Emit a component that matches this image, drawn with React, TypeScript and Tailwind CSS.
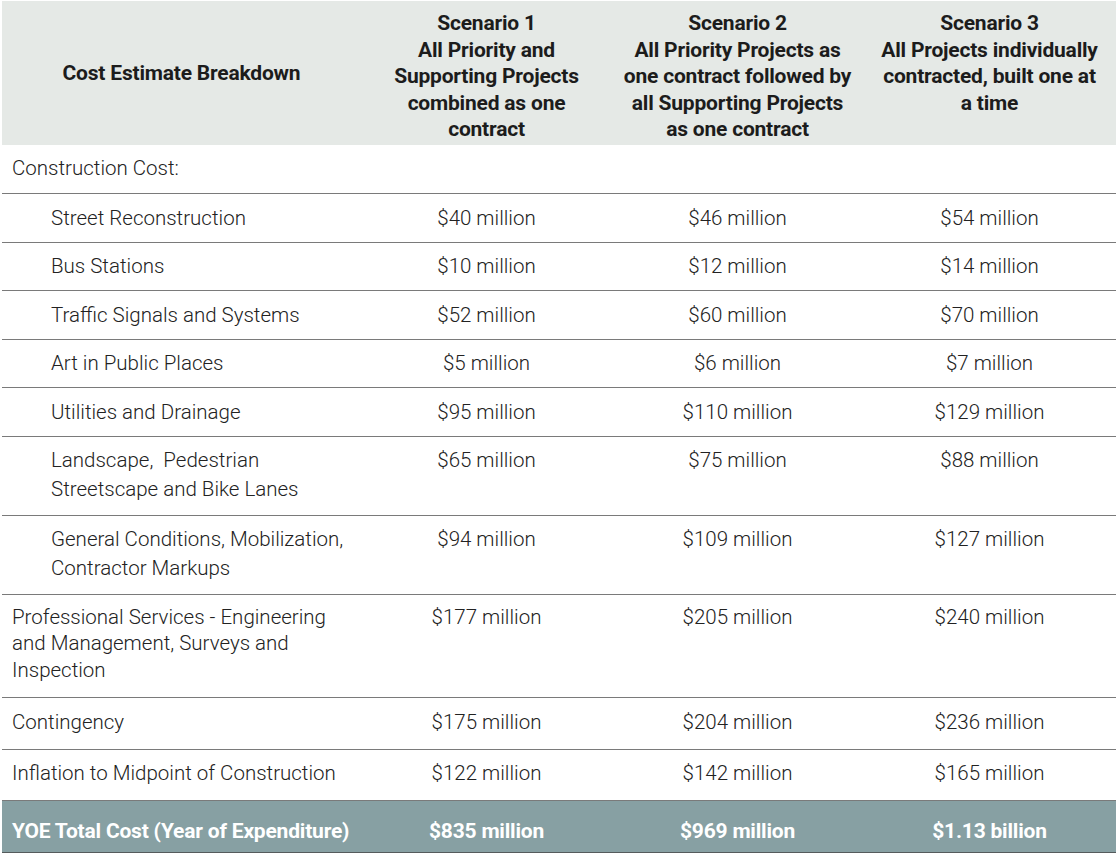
import React from "react";

type Row = {
  label: string[];
  values: string[];
  indent?: boolean;
  h: number;
  pt: number;
  leading: string;
};

const rows: Row[] = [
  { label: ["Street Reconstruction"], values: ["$40 million", "$46 million", "$54 million"], indent: true, h: 49, pt: 10, leading: "leading-[28px]" },
  { label: ["Bus Stations"], values: ["$10 million", "$12 million", "$14 million"], indent: true, h: 48, pt: 9, leading: "leading-[28px]" },
  { label: ["Traffic Signals and Systems"], values: ["$52 million", "$60 million", "$70 million"], indent: true, h: 49, pt: 10, leading: "leading-[28px]" },
  { label: ["Art in Public Places"], values: ["$5 million", "$6 million", "$7 million"], indent: true, h: 48, pt: 9, leading: "leading-[28px]" },
  { label: ["Utilities and Drainage"], values: ["$95 million", "$110 million", "$129 million"], indent: true, h: 49, pt: 10, leading: "leading-[28px]" },
  { label: ["Landscape,  Pedestrian", "Streetscape and Bike Lanes"], values: ["$65 million", "$75 million", "$88 million"], indent: true, h: 79, pt: 9, leading: "leading-[29px]" },
  { label: ["General Conditions, Mobilization,", "Contractor Markups"], values: ["$94 million", "$109 million", "$127 million"], indent: true, h: 79, pt: 9, leading: "leading-[29px]" },
  { label: ["Professional Services - Engineering", "and Management, Surveys and", "Inspection"], values: ["$177 million", "$205 million", "$240 million"], h: 103, pt: 9, leading: "leading-[26.5px]" },
  { label: ["Contingency"], values: ["$175 million", "$204 million", "$236 million"], h: 52, pt: 10, leading: "leading-[28px]" },
  { label: ["Inflation to Midpoint of Construction"], values: ["$122 million", "$142 million", "$165 million"], h: 51, pt: 9, leading: "leading-[28px]" },
];

const headers = [
  ["Scenario 1", "All Priority and", "Supporting Projects", "combined as one", "contract"],
  ["Scenario 2", "All Priority Projects as", "one contract followed by", "all Supporting Projects", "as one contract"],
  ["Scenario 3", "All Projects individually", "contracted, built one at", "a time"],
];

export default function App() {
  return (
    <div
      className="w-[1116px] h-[856px] bg-white overflow-hidden text-[#222222]"
      style={{ fontFamily: "Roboto, 'Liberation Sans', sans-serif" }}
    >
      <table className="ml-[2px] mt-[1px] w-[1114px] border-collapse table-fixed">
        <colgroup>
          <col className="w-[359px]" />
          <col className="w-[251px]" />
          <col className="w-[251px]" />
          <col className="w-[253px]" />
        </colgroup>
        <thead>
          <tr className="bg-[#e5e9e6] h-[144px]">
            <th className="align-middle text-center text-[21px] font-bold leading-[26.5px] text-[#1c1c1c] tracking-[-0.2px]">
              Cost Estimate Breakdown
            </th>
            {headers.map((h, i) => (
              <th
                key={i}
                className="align-top pt-[9px] text-center text-[21px] font-bold leading-[26.5px] text-[#1c1c1c] tracking-[-0.2px]"
              >
                {h.map((l, j) => (
                  <div key={j} className="whitespace-nowrap">{l}</div>
                ))}
              </th>
            ))}
          </tr>
        </thead>
        <tbody className="text-[20.5px] font-light">
          <tr className="h-[48px] border-b border-[#7a7a7a]">
            <td className="align-top pl-[10px] pt-[9px] leading-[28px]">Construction Cost:</td>
            <td />
            <td />
            <td />
          </tr>
          {rows.map((r, i) => (
            <tr key={i} className="border-b border-[#7a7a7a]" style={{ height: r.h }}>
              <td
                className={`align-top ${r.leading} ${r.indent ? "pl-[49px]" : "pl-[10px]"}`}
                style={{ paddingTop: r.pt }}
              >
                {r.label.map((l, j) => (
                  <div key={j} className="whitespace-pre">{l}</div>
                ))}
              </td>
              {r.values.map((v, j) => (
                <td key={j} className={`align-top text-center ${r.leading}`} style={{ paddingTop: r.pt }}>
                  {v}
                </td>
              ))}
            </tr>
          ))}
          <tr className="h-[52px] bg-[#87a0a3] text-white text-[21px] font-bold border-b border-[#555b5c]">
            <td className="pl-[10px] pt-[9px] align-middle leading-[28px] tracking-[-0.2px] whitespace-nowrap">YOE Total Cost (Year of Expenditure)</td>
            <td className="pt-[9px] text-center align-middle leading-[28px] tracking-[-0.2px]">$835 million</td>
            <td className="pt-[9px] text-center align-middle leading-[28px] tracking-[-0.2px]">$969 million</td>
            <td className="pt-[9px] text-center align-middle leading-[28px] tracking-[-0.2px]">$1.13 billion</td>
          </tr>
        </tbody>
      </table>
    </div>
  );
}
